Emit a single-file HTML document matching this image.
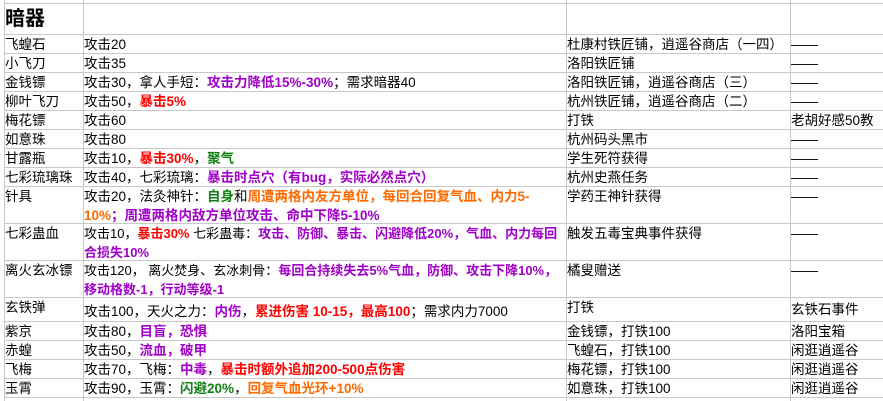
<!DOCTYPE html><html><head><meta charset="utf-8"><style>
body{margin:0;width:883px;height:401px;background:#fff;position:relative;overflow:hidden;font-family:"Liberation Sans","Noto Sans CJK SC","WenQuanYi Zen Hei",sans-serif;font-size:13.5px;color:#000}
.h{position:absolute;left:4px;right:0;height:1px;background:#c8c8c8}
.v{position:absolute;top:0;bottom:0;width:1px;background:#c8c8c8}
.c{position:absolute;line-height:19px;white-space:nowrap}
.s{font-size:13px;width:481px;overflow:hidden}
.p{color:#a000c8;font-weight:bold}.r{color:#f00;font-weight:bold}.g{color:#108010;font-weight:bold}.o{color:#ff6a00;font-weight:bold}
</style></head><body>
<div class="v" style="left:4px"></div><div class="v" style="left:83px"></div><div class="v" style="left:566px"></div><div class="v" style="left:790px"></div>
<div class="h" style="top:3px"></div><div class="h" style="top:34px"></div><div class="h" style="top:53px"></div><div class="h" style="top:72px"></div><div class="h" style="top:91px"></div><div class="h" style="top:110px"></div><div class="h" style="top:129px"></div><div class="h" style="top:148px"></div><div class="h" style="top:167px"></div><div class="h" style="top:186px"></div><div class="h" style="top:223px"></div><div class="h" style="top:260px"></div><div class="h" style="top:297px"></div><div class="h" style="top:321px"></div><div class="h" style="top:340px"></div><div class="h" style="top:359px"></div><div class="h" style="top:378px"></div><div class="h" style="top:397px"></div>
<div class="c" style="left:5px;top:6px;font-size:20px;font-weight:bold;line-height:26px">暗器</div>
<div class="c" style="left:5px;top:35px">飞蝗石</div><div class="c" style="left:84px;top:35px">攻击20</div><div class="c" style="left:567px;top:35px">杜康村铁匠铺，逍遥谷商店（一四）</div><div class="c" style="left:791px;top:35px">——</div>
<div class="c" style="left:5px;top:54px">小飞刀</div><div class="c" style="left:84px;top:54px">攻击35</div><div class="c" style="left:567px;top:54px">洛阳铁匠铺</div><div class="c" style="left:791px;top:54px">——</div>
<div class="c" style="left:5px;top:73px">金钱镖</div><div class="c" style="left:84px;top:73px">攻击30，拿人手短：<span class="p">攻击力降低15%-30%</span>；需求暗器40</div><div class="c" style="left:567px;top:73px">洛阳铁匠铺，逍遥谷商店（三）</div><div class="c" style="left:791px;top:73px">——</div>
<div class="c" style="left:5px;top:92px">柳叶飞刀</div><div class="c" style="left:84px;top:92px">攻击50，<span class="r">暴击5%</span></div><div class="c" style="left:567px;top:92px">杭州铁匠铺，逍遥谷商店（二）</div><div class="c" style="left:791px;top:92px">——</div>
<div class="c" style="left:5px;top:111px">梅花镖</div><div class="c" style="left:84px;top:111px">攻击60</div><div class="c" style="left:567px;top:111px">打铁</div><div class="c" style="left:791px;top:111px">老胡好感50教</div>
<div class="c" style="left:5px;top:130px">如意珠</div><div class="c" style="left:84px;top:130px">攻击80</div><div class="c" style="left:567px;top:130px">杭州码头黑市</div><div class="c" style="left:791px;top:130px">——</div>
<div class="c" style="left:5px;top:149px">甘露瓶</div><div class="c" style="left:84px;top:149px">攻击10，<span class="r">暴击30%</span>，<span class="g">聚气</span></div><div class="c" style="left:567px;top:149px">学生死符获得</div><div class="c" style="left:791px;top:149px">——</div>
<div class="c" style="left:5px;top:168px">七彩琉璃珠</div><div class="c" style="left:84px;top:168px">攻击40，七彩琉璃：<span class="p">暴击时点穴（有bug，实际必然点穴）</span></div><div class="c" style="left:567px;top:168px">杭州史燕任务</div><div class="c" style="left:791px;top:168px">——</div>
<div class="c" style="left:5px;top:187px">针具</div><div class="c" style="left:84px;top:187px">攻击20，法灸神针：<span class="g">自身</span>和<span class="o">周遭两格内友方单位，每回合回复气血、内力5-</span><br><span class="o">10%</span><span class="p">；周遭两格内敌方单位攻击、命中下降5-10%</span></div><div class="c" style="left:567px;top:187px">学药王神针获得</div><div class="c" style="left:791px;top:187px">——</div>
<div class="c" style="left:5px;top:224px">七彩蛊血</div><div class="c s" style="left:84px;top:224px">攻击10，<span class="r">暴击30%</span> 七彩蛊毒：<span class="p">攻击、防御、暴击、闪避降低20%，气血、内力每回</span><br><span class="p">合损失10%</span></div><div class="c" style="left:567px;top:224px">触发五毒宝典事件获得</div><div class="c" style="left:791px;top:224px">——</div>
<div class="c" style="left:5px;top:261px">离火玄冰镖</div><div class="c s" style="left:84px;top:261px">攻击120， 离火焚身、玄冰刺骨：<span class="p">每回合持续失去5%气血，防御、攻击下降10%，</span><br><span class="p">移动格数-1，行动等级-1</span></div><div class="c" style="left:567px;top:261px">橘叟赠送</div><div class="c" style="left:791px;top:261px">——</div>
<div class="c" style="left:5px;top:298px">玄铁弹</div><div class="c" style="left:84px;top:302px">攻击100，天火之力：<span class="p">内伤</span>，<span class="r">累进伤害 10-15，最高100</span>；需求内力7000</div><div class="c" style="left:567px;top:298px">打铁</div><div class="c" style="left:791px;top:300px">玄铁石事件</div>
<div class="c" style="left:5px;top:322px">紫京</div><div class="c" style="left:84px;top:322px">攻击80，<span class="p">目盲，恐惧</span></div><div class="c" style="left:567px;top:322px">金钱镖，打铁100</div><div class="c" style="left:791px;top:322px">洛阳宝箱</div>
<div class="c" style="left:5px;top:341px">赤蝗</div><div class="c" style="left:84px;top:341px">攻击50，<span class="p">流血，破甲</span></div><div class="c" style="left:567px;top:341px">飞蝗石，打铁100</div><div class="c" style="left:791px;top:341px">闲逛逍遥谷</div>
<div class="c" style="left:5px;top:360px">飞梅</div><div class="c" style="left:84px;top:360px">攻击70，飞梅：<span class="p">中毒</span>，<span class="r">暴击时额外追加200-500点伤害</span></div><div class="c" style="left:567px;top:360px">梅花镖，打铁100</div><div class="c" style="left:791px;top:360px">闲逛逍遥谷</div>
<div class="c" style="left:5px;top:379px">玉霄</div><div class="c" style="left:84px;top:379px">攻击90，玉霄：<span class="g">闪避20%</span>，<span class="o">回复气血光环+10%</span></div><div class="c" style="left:567px;top:379px">如意珠，打铁100</div><div class="c" style="left:791px;top:379px">闲逛逍遥谷</div>
</body></html>
